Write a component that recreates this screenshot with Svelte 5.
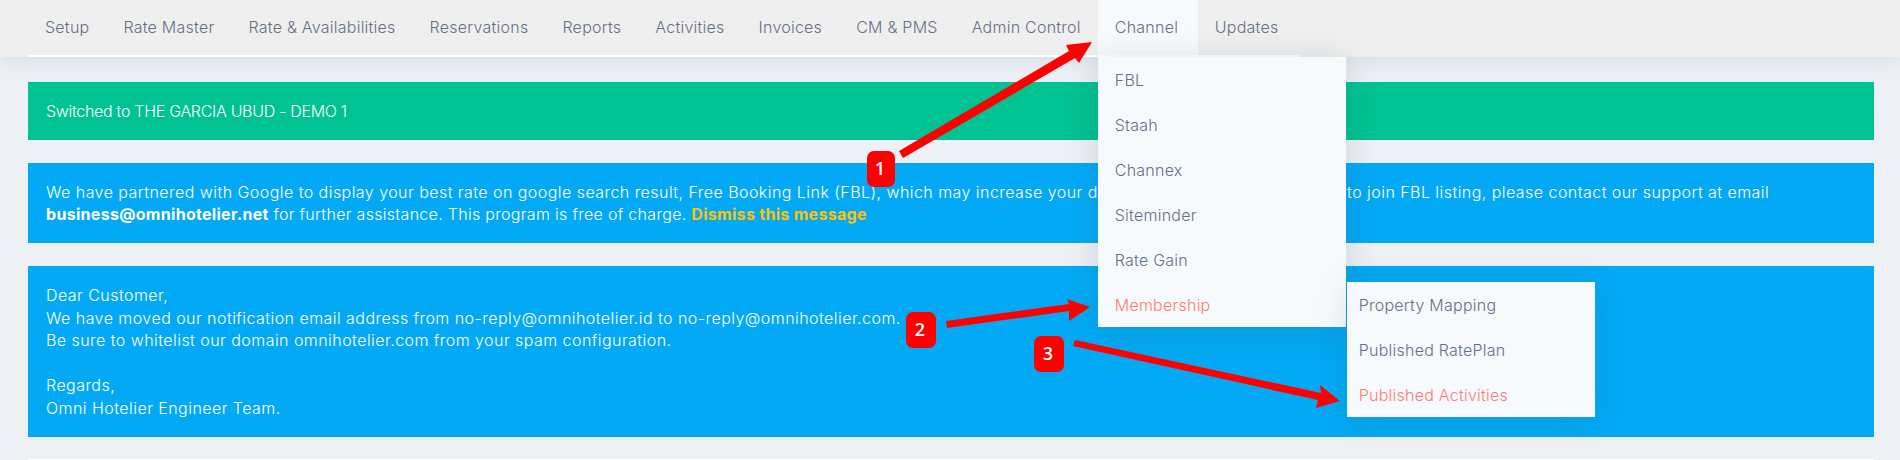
<script>
  const menu = ['Setup', 'Rate Master', 'Rate & Availabilities', 'Reservations', 'Reports', 'Activities', 'Invoices', 'CM & PMS', 'Admin Control'];
  const channels = ['FBL', 'Staah', 'Channex', 'Siteminder', 'Rate Gain'];
  const membership = ['Property Mapping', 'Published RatePlan'];
</script>

<header class="topbar">
  <ul class="nav">
    {#each menu as item}
      <li><a href="#top">{item}</a></li>
    {/each}
    <li class="open">
      <a href="#top">Channel</a>
      <ul class="drop">
        {#each channels as item}
          <li><a href="#top">{item}</a></li>
        {/each}
        <li class="has-sub">
          <a href="#top" class="hot">Membership</a>
          <ul class="sub">
            {#each membership as item}
              <li><a href="#top">{item}</a></li>
            {/each}
            <li><a href="#top" class="hot">Published Activities</a></li>
          </ul>
        </li>
      </ul>
    </li>
    <li><a href="#top">Updates</a></li>
  </ul>
</header>

<main class="content">
  <div class="alert green">Switched to THE GARCIA UBUD - DEMO 1</div>
  <div class="alert blue">
    We have partnered with Google to display your best rate on google search result, Free Booking Link (FBL), which may increase your <span class="covered">direct booking. If you're interested</span> to join FBL listing, please contact our support at email<br />
    <span class="tight"><b>business@omnihotelier.net</b> for further assistance. This program is free of charge. <a href="#top" class="dismiss">Dismiss this message</a></span>
  </div>
  <div class="alert blue long">
    Dear Customer,<br />
    We have moved our notification email address from no-reply@omnihotelier.id to no-reply@omnihotelier.com.<br />
    Be sure to whitelist our domain omnihotelier.com from your spam configuration.<br />
    <br />
    Regards,<br />
    Omni Hotelier Engineer Team.
  </div>
  <div class="next-card"></div>
</main>

<!-- numbered callouts drawn over the screenshot -->
<svg class="marks" width="1900" height="460" viewBox="0 0 1900 460">
  <g fill="#ff0000">
    <path d="M899 151 L1069 51 L1066 45 L1092 42 L1079 63 L1075 58 L903 158 Z" />
    <path d="M946 321 L1069 304 L1067 299 L1090 307 L1069 321 L1069 311 L947 328 Z" />
    <path d="M1075 340 L1321 393 L1320 385 L1340 401 L1316 408 L1318 400 L1073 346 Z" />
  </g>
  <g>
    <rect class="badge" x="867" y="151" width="28" height="36" rx="7" />
    <rect class="badge" x="906" y="312" width="30" height="36" rx="7" />
    <rect class="badge" x="1034" y="336" width="30" height="36" rx="7" />
    <text x="880" y="175">1</text>
    <text x="920" y="336">2</text>
    <text x="1048" y="360">3</text>
  </g>
</svg>

<style>
  :global(body) {
    margin: 0;
    background: #edf1f6;
    height: 460px;
    overflow: hidden;
    font-family: Inter, "Open Sans", sans-serif;
    font-size: 16px;
    font-weight: 300;
    line-height: 22px;
    letter-spacing: 0.45px;
  }

  a {
    text-decoration: none;
  }

  ul {
    list-style: none;
    margin: 0;
    padding: 0;
  }

  .topbar {
    position: relative;
    height: 57px;
    padding-left: 28px;
    background: #efefef;
    box-shadow: 0 2px 22px rgba(90, 100, 125, 0.16);
    z-index: 2;
  }

  .nav {
    display: flex;
    width: 1271px;
    height: 55px;
    border-bottom: 2px solid #fff;
    letter-spacing: 0.24px;
  }

  .nav > li {
    position: relative;
  }

  .nav a {
    display: block;
    padding: 0 17px;
    color: #667085;
    line-height: 55px;
    white-space: nowrap;
  }

  .nav > .open {
    min-width: 100px;
    background: #f7fafd;
  }

  .drop {
    position: absolute;
    top: 57px;
    left: 0;
    width: 248px;
    background: #f7fafd;
    box-shadow: 0 4px 30px rgba(60, 70, 90, 0.18);
  }

  .drop li {
    position: relative;
    height: 45px;
  }

  .drop a {
    line-height: 46px;
  }

  .nav .hot {
    color: #ff7a6e;
  }

  .sub {
    position: absolute;
    top: 0;
    left: 249px;
    width: 248px;
    background: #f7fafd;
    box-shadow: 0 4px 30px rgba(60, 70, 90, 0.14);
  }

  .sub a {
    padding: 0 12px;
  }

  .content {
    display: flex;
    flex-direction: column;
    gap: 23px;
    padding: 25px 26px 0 28px;
  }

  .alert {
    padding: 18px;
    color: #fff;
    white-space: nowrap;
    overflow: hidden;
  }

  .long {
    line-height: 22.5px;
  }

  .tight {
    letter-spacing: 0.3px;
  }

  .covered {
    letter-spacing: 0;
  }

  .green {
    background: #00c292;
    letter-spacing: -0.3px;
  }

  .blue {
    background: #03a9f4;
  }

  .alert b {
    font-weight: 700;
  }

  .dismiss {
    color: #ffc107;
    font-weight: 700;
  }

  .next-card {
    height: 1px;
    margin-top: -1px;
    background: #fff;
  }

  .marks {
    position: absolute;
    top: 0;
    left: 0;
    z-index: 3;
    pointer-events: none;
  }

  .badge {
    fill: #ff0000;
  }

  .marks text {
    fill: #fff;
    font-family: "Open Sans", sans-serif;
    font-size: 18px;
    font-weight: 600;
    text-anchor: middle;
    letter-spacing: 0;
  }
</style>
